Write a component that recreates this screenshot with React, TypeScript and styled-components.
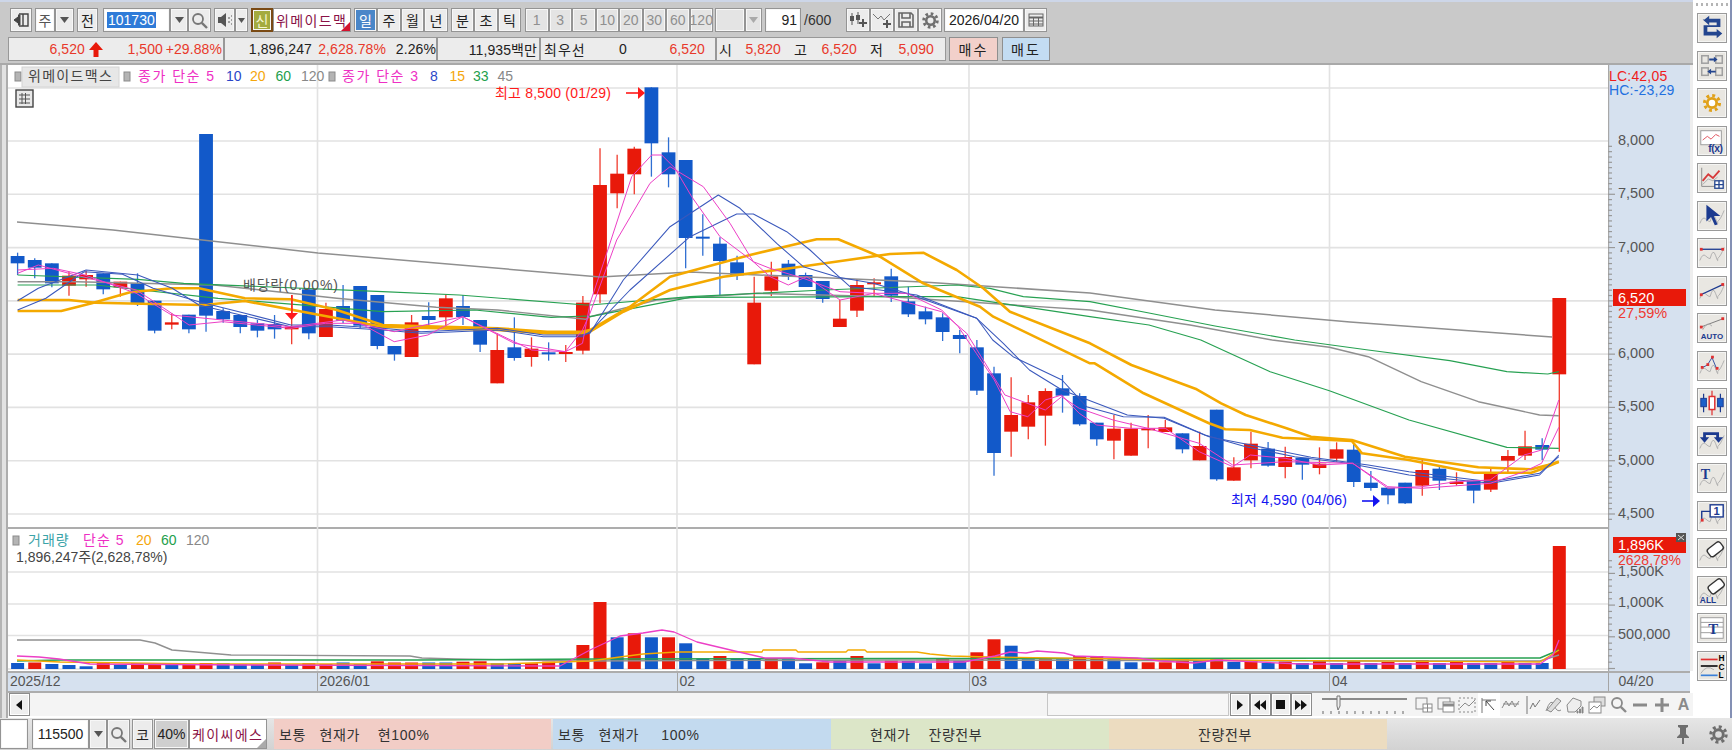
import React from "react";
import styled, { createGlobalStyle } from "styled-components";

const FONT = `"Liberation Sans", "Noto Sans CJK KR", sans-serif`;
const RED = "#e8190a", BLUE = "#1259c9", TXT_RED = "#e8392b";

const Global = createGlobalStyle`
  html, body { margin: 0; width: 1732px; height: 750px; overflow: hidden; background: #fff; font-family: ${FONT}; }
  * { box-sizing: border-box; }
`;

/* ---------- page frame ---------- */
const Page = styled.div`display: flex; flex-direction: column; width: 1732px; height: 750px;`;
const Main = styled.div`display: flex; height: 718px;`;
const LeftCol = styled.div`display: flex; flex-direction: column; width: 1693px;`;
const Header = styled.div`
  height: 65px; background: #c9c9c9; border-top: 2px solid #cdd6e8; border-bottom: 2px solid #a9a9a9;
  padding: 6px 0 0 0; display: flex; flex-direction: column; gap: 5px;
`;
const Row = styled.div<{ $h: number }>`display: flex; align-items: stretch; height: ${p => p.$h}px; padding-left: 10px;`;
const Btn = styled.div<{ $w: number; $ml?: number; $off?: boolean; $bg?: string; $c?: string }>`
  flex: none; width: ${p => p.$w}px; margin-left: ${p => p.$ml ?? 0}px;
  display: flex; align-items: center; justify-content: center; position: relative;
  background: ${p => p.$bg ?? (p.$off ? "#e4e4e4" : "#ececec")}; color: ${p => p.$c ?? (p.$off ? "#8f8f8f" : "#222")};
  border: 1px solid #949494; box-shadow: inset 0 0 0 1px #f7f7f7;
  font-size: 14px; white-space: nowrap; overflow: hidden;
`;
const Sel = styled.span`background: #2f7bd8; color: #fff; font-size: 14px; height: 16px; line-height: 16px; padding: 0 1px;`;
const NameCell = styled(Btn)`justify-content: flex-start; padding-left: 2px; letter-spacing: 1.4px; color: #8a1246; box-shadow: none;`;
const Corner = styled.i`position: absolute; right: 0; bottom: 0; border-style: solid; border-width: 0 0 9px 9px; border-color: transparent transparent #d4122e transparent;`;
const Plain = styled.span`flex: none; margin-left: 3px; width: 40px; color: #333; font-size: 14px; align-self: center;`;

const InfoCell = styled.div<{ $w: number; $ml?: number }>`
  flex: none; width: ${p => p.$w}px; margin-left: ${p => p.$ml ?? 0}px; display: flex; align-items: center;
  background: #ececec; border: 1px solid #989898; font-size: 14px; white-space: nowrap;
`;
const Val = styled.span<{ $w: number; $left?: boolean; $c?: string; $ls?: number }>`
  flex: none; width: ${p => p.$w}px; text-align: ${p => (p.$left ? "left" : "right")};
  color: ${p => p.$c ?? "#222"}; letter-spacing: ${p => p.$ls ?? 0.1}px;
`;
const Trade = styled.div<{ $bg: string; $w: number; $ml: number }>`
  flex: none; width: ${p => p.$w}px; margin-left: ${p => p.$ml}px; background: ${p => p.$bg}; color: #222;
  border: 1px solid #8f8f8f; display: flex; align-items: center; justify-content: center; font-size: 14px; letter-spacing: 2px;
`;

/* ---------- chart ---------- */
const ChartWrap = styled.div`display: flex; flex: 1;`;
const Edge = styled.div`width: 8px; background: #e2e2e2; border-left: 2px solid #b4b4b4; border-right: 2px solid #adadad;`;
const ChartCol = styled.div`display: flex; flex-direction: column; width: 1685px;`;
const Pane = styled.div<{ $h: number; $line?: boolean }>`
  display: flex; height: ${p => p.$h}px;
  ${p => (p.$line ? "box-shadow: inset 0 -2px 0 #adadad; position: relative;" : "")}
`;
const Plot = styled.svg<{ $w: number }>`display: block; flex: none; width: ${p => p.$w}px; height: 100%; font-family: ${FONT};`;
const AxisEnd = styled.div`width: 3px; background: #eee;`;
const XRow = styled.div`display: flex; height: 22px; background: #d6e1ef; border-top: 2px solid #adadad; border-bottom: 2px solid #adadad; width: 1682px;`;
const XCell = styled.div<{ $w: number; $pl?: number; $end?: boolean }>`
  flex: none; width: ${p => p.$w}px; border-right: ${p => (p.$end ? "0" : "1px solid #a5a5a5")}; padding-left: ${p => p.$pl ?? 2}px;
  font-size: 14px; color: #555; line-height: 17px;
`;
const ScrollRow = styled.div`
  display: flex; align-items: stretch; height: 23px; width: 1685px; padding-left: 1px;
  background-color: #f4f4f4; background-image: radial-gradient(#e8e8e8 .6px, transparent .6px); background-size: 2px 2px;
`;
const SBtn = styled.div<{ $ml?: number; $w?: number }>`
  flex: none; width: ${p => p.$w ?? 20.500}px; margin-left: ${p => p.$ml ?? 0}px; display: flex; align-items: center; justify-content: center;
  background: #efefef; border: 1px solid #8c8c8c; box-shadow: inset 0 0 0 1px #fff;
`;
const Thumb = styled.div`flex: none; width: 182px; margin-left: 1017px; background: #f6f6f6; border: 1px solid #c6c6c6;`;
const Slider = styled.svg`flex: none; margin-left: 8px; width: 92px; height: 23px;`;
const MiniIcon = styled.div<{ $ml?: number; $on?: boolean }>`
  flex: none; width: 21.600px; margin-left: ${p => p.$ml ?? 0}px; display: flex; align-items: center; justify-content: center;
  background: ${p => (p.$on ? "#fff" : "transparent")}; color: #8a8a8a; font-weight: 700; font-size: 16px;
`;

/* ---------- right toolbar ---------- */
const Side = styled.div`
  width: 39px; background: #fff; border-right: 2px solid #8490b4; display: flex; flex-direction: column; gap: 7.5px; padding: 13px 0 0 4px; position: relative;
`;
const Grip = styled.i`
  position: absolute; left: 3px; top: 3px; width: 33px; height: 3px;
  background: repeating-linear-gradient(90deg, #b5b5b5 0 2px, transparent 2px 5px);
`;
const SideBtn = styled.div`
  flex: none; width: 30px; height: 30px; background: #e9e7e2; border: 1px solid #9a9a9a; box-shadow: inset 0 0 0 1px #f5f5f3;
  display: flex; align-items: center; justify-content: center;
`;

/* ---------- bottom bar ---------- */
const Bottom = styled.div`
  display: flex; align-items: stretch; height: 32px; padding: 1px 0 1px 0; background: linear-gradient(#e6e6e6, #d2d2d2); position: relative;
`;
const BCell = styled(Btn)`font-size: 14px;`;
const Order = styled.div<{ $bg: string; $w: number; $pl: number; $ml?: number }>`
  flex: none; width: ${p => p.$w}px; margin-left: ${p => p.$ml ?? 0}px; background: ${p => p.$bg}; padding-left: ${p => p.$pl}px;
  display: flex; align-items: center; font-size: 14px; color: #333; letter-spacing: .6px; white-space: pre;
`;
const Tail = styled.div`margin-left: auto; display: flex; align-items: center; gap: 16px; padding-right: 4px;`;

/* ---------- icons ---------- */
const DD = () => <svg width="9" height="6"><path d="M0 0h9L4.5 6z" fill="#555" /></svg>;
const Lens = ({ c = "#777" }: { c?: string }) => (
  <svg width="17" height="17" viewBox="0 0 17 17" fill="none" stroke={c} strokeWidth="1.8"><circle cx="7" cy="7" r="5" /><path d="M10.8 10.8 16 16" strokeWidth="2.4" /></svg>
);
const Gear = ({ s = 18, c = "#777", hole = "none" }: { s?: number; c?: string; hole?: string }) => (
  <svg width={s} height={s} viewBox="0 0 20 20">
    <circle cx="10" cy="10" r="8" stroke={c} strokeWidth="3.4" strokeDasharray="3.1 3.18" fill="none" />
    <circle cx="10" cy="10" r="5" stroke={c} strokeWidth="3" fill={hole} />
  </svg>
);
const Wave = () => <path d="M2 23q3-8 6-5t5 3q3-12 6-3t2 3q3-2 7-12" fill="none" stroke="#aeaeae" strokeWidth="1" />;
const S: React.FC<{ children?: React.ReactNode }> = ({ children }) => (
  <svg width="28" height="28" viewBox="0 0 30 30" fontFamily={`"Liberation Sans", sans-serif`}>{children}</svg>
);
const Eraser = ({ x, y }: { x: number; y: number }) => (
  <rect x={x} y={y} width={17} height={10} rx={3} fill="#fff" stroke="#333" strokeWidth="1.5" transform={`rotate(-38 ${x + 8.5} ${y + 5})`} />
);
const sideIcons: React.ReactNode[] = [
  <S><path d="M8 6h-1l5-4v3h12v9H10v5h10v-3l6 5-6 5v-3H6V12h14V9H12v3L5 6z" fill="#24468f" /></S>,
  <S><g fill="none" stroke="#a0a0a0" strokeWidth="1.6"><rect x="4" y="4" width="7" height="8" /><rect x="19" y="4" width="7" height="8" /><rect x="4" y="17" width="7" height="8" /><rect x="19" y="17" width="7" height="8" /></g><path d="M12 8h7M12 21h7" stroke="#24468f" strokeWidth="2" /><path d="m17 5 4 3-4 3zM14 18l-4 3 4 3z" fill="#24468f" /></S>,
  <S><g transform="translate(5 5)"><Gear s={20} c="#e0a11a" hole="#fff" /></g></S>,
  <S><rect x="3" y="4" width="22" height="15" fill="#fff" stroke="#999" /><path d="M5 14l5-4 4 3 5-5 4 2" stroke="#e0505a" fill="none" /><text x="11" y="27" fontSize="11" fontWeight="700" fill="#1c3a8f" letterSpacing="-.5">f(x)</text></S>,
  <S><path d="M4 4v20h16" stroke="#888" fill="none" /><path d="M5 18l6-7 5 4 7-8" stroke="#d63a3a" strokeWidth="2" fill="none" /><path d="M5 22l6-6 5 2 5-4" stroke="#aaa" fill="none" /><g fill="#fff" stroke="#24468f" strokeWidth="1.4"><rect x="18" y="18" width="9" height="8" /><path d="M22.5 18v8M18 22h9" /></g></S>,
  <S><Wave /><path d="M9 3v18l5-5 4 9 3-1-4-9h7z" fill="#1c3a8f" /></S>,
  <S><Wave /><path d="M3 11h24" stroke="#1c3a8f" strokeWidth="1.4" /><rect x="2" y="9.500" width="3" height="3" fill="#e03030" /><rect x="25" y="9.500" width="3" height="3" fill="#e03030" /></S>,
  <S><Wave /><path d="M3 19 27 8" stroke="#1c3a8f" strokeWidth="1.4" /><rect x="2" y="17.500" width="3" height="3" fill="#e03030" /><rect x="25" y="6.500" width="3" height="3" fill="#e03030" /></S>,
  <S><path d="M3 14 27 5" stroke="#777" /><rect x="2" y="12.500" width="3" height="3" fill="#e03030" /><rect x="25" y="3.500" width="3" height="3" fill="#e03030" /><path d="M5 17q5-10 10-4" stroke="#aaa" fill="none" /><text x="3" y="27" fontSize="8.500" fontWeight="700" fill="#1c3a8f">AUTO</text></S>,
  <S><Wave /><path d="M4 17l6-3 5-8 5 12" stroke="#2b4aa0" fill="none" /><g fill="#e03030"><rect x="3" y="15" width="3" height="3" /><rect x="9" y="12" width="3" height="3" /><rect x="14" y="4" width="3" height="3" /><rect x="19" y="16" width="3" height="3" /></g></S>,
  <S><path d="M6 5v20M24 5v20" stroke="#1c3a8f" strokeWidth="1.3" /><path d="M15 2v26" stroke="#e03030" strokeWidth="1.3" /><rect x="3" y="10" width="6" height="9" fill="#1c5fc9" stroke="#1c3a8f" /><rect x="12" y="8" width="6" height="14" fill="#fff" stroke="#e03030" strokeWidth="1.6" /><rect x="21" y="10" width="6" height="9" fill="#1c5fc9" stroke="#1c3a8f" /></S>,
  <S><Wave /><path d="M7 15V7h14v6" stroke="#1c3a8f" strokeWidth="3" fill="none" /><path d="M2 11h10l-5 6zM17 11h10l-5 6z" fill="#1c3a8f" /></S>,
  <S><Wave /><text x="3" y="16" fontSize="15" fontWeight="700" fontFamily="Liberation Serif" fill="#1c3a8f">T</text></S>,
  <S><Wave /><path d="M4 20V10h9" stroke="#1c3a8f" strokeWidth="1.5" fill="none" /><rect x="3" y="18" width="3" height="3" fill="#e03030" /><rect x="13" y="3" width="14" height="13" fill="#fff" stroke="#1c3a8f" strokeWidth="1.5" /><text x="16.500" y="14" fontSize="12" fontWeight="700" fill="#1c3a8f">1</text></S>,
  <S><Wave /><Eraser x={10} y={6} /></S>,
  <S><Wave /><Eraser x={11} y={5} /><text x="2" y="28" fontSize="9" fontWeight="700" fill="#1c3a8f">ALL</text></S>,
  <S><g stroke="#999" fill="#fff"><rect x="3" y="4" width="24" height="22" /><path d="M3 9h24M3 14h24M3 20h24" /></g><text x="11" y="21" fontSize="16" fontWeight="700" fontFamily="Liberation Serif" fill="#1c3a8f">T</text></S>,
  <S><path d="M3 8h18" stroke="#e03030" strokeWidth="1.8" /><path d="M3 15h18" stroke="#111" strokeWidth="1.8" /><path d="M3 25h18" stroke="#3a80d8" strokeWidth="1.8" /><path d="M3 23q6-10 14-4" stroke="#aaa" fill="none" /><text x="22" y="10" fontSize="9" fontWeight="700">H</text><text x="22" y="19" fontSize="9" fontWeight="700">C</text><text x="22" y="28" fontSize="9" fontWeight="700">L</text></S>,
];
const M: React.FC<{ children?: React.ReactNode }> = ({ children }) => (
  <svg width="20" height="20" viewBox="0 0 20 20" fill="none" stroke="#8a8a8a">{children}</svg>
);
const tray: React.ReactNode[] = [
  <M><rect x="2" y="3" width="11" height="11" /><rect x="9" y="9" width="9" height="8" fill="#fff" /><path d="M13.500 9v8M9 13h9" /></M>,
  <M><rect x="2" y="3" width="12" height="11" /><rect x="7" y="7" width="11" height="10" fill="#fff" /><path d="M7 10h11" strokeWidth="3" /></M>,
  <M><rect x="2" y="3" width="16" height="14" strokeDasharray="2 2" /><path d="M3 13l5-5 4 3 6-6" /></M>,
  <M><path d="M3 3v15M3 5h14" stroke="#777" /><path d="M15 15 7 6m0 5V6h5" stroke="#444" /></M>,
  <M><path d="M1 13l4-7 3 5 3-5 3 6 4-6M2 9h16" /></M>,
  <M><path d="M5 1v18M8 14l3-6 2 4 5-7" stroke="#777" /></M>,
  <M><path d="M2 16q5-14 8-6t7 5" /><path d="M3 15 13 3l4 3L7 17z" fill="#ddd" /></M>,
  <M><path d="M2 10 8 3l8 3v5l-6 6H3z" fill="#eee" /><path d="M12 16h1v2h-1zM14.500 14h1v4h-1zM17 12h1v6h-1z" fill="#777" /></M>,
  <M><rect x="7" y="2" width="11" height="9" fill="#ddd" /><rect x="2" y="7" width="12" height="11" fill="#fff" /><path d="M3 15l4-4 3 2 3-3" /></M>,
];

/* ---------- chart data ---------- */
const X = (i: number) => 17.6 + 17.13 * i;
const Y = (p: number) => 141 + (8000 - p) * 0.10657;
type Z = [number, number];
const z7 = (a: Z[]): Z[] => a.map(([x, y]) => [x / 2.613, 230 + y / 3]);
const z8 = (a: Z[]): Z[] => a.map(([x, y]) => [590 + x / 3, 80 + y / 3]);
const z9 = (a: Z[]): Z[] => a.map(([x, y]) => [960 + x / 2.45, 340 + y / 3]);
type C = ["R" | "B", number, number, number, number];
const mapC = (y0: number, a: C[]): C[] => a.map(([c, t, b, wt, wb]) => [c, y0 + t / 3, y0 + b / 3, y0 + wt / 3, y0 + wb / 3]);
const candles: C[] = [
  ...mapC(230, [
    ["B",78,100,68,135],["B",90,113,85,145],["B",100,160,100,172],["R",137,167,125,197],["R",135,148,122,170],
    ["B",130,178,130,193],["R",155,172,155,200],["B",160,220,130,228],["B",212,302,212,310],["R",277,284,250,298],
    ["B",254,298,254,310],["B",-288,257,-288,305],["B",243,268,235,278],["B",255,291,255,310],["B",280,302,270,322],
    ["B",282,298,255,326],["R",290,298,195,343],["B",178,310,178,328],["R",237,321,218,321],["B",228,272,165,280],
    ["B",168,287,168,295],["B",195,348,195,358],["B",348,373,348,392],["R",277,381,255,381],["B",258,270,217,290],
    ["R",205,262,193,298],["B",228,261,195,285],["B",270,344,270,366],["R",360,460,310,460],["B",352,384,262,392],
    ["R",356,381,322,410],["B",367,372,337,392],["R",366,368,345,396],["R",218,362,198,373],
  ]),
  ...mapC(80, [
    ["R",315,643,205,670],["R",281,340,224,385],["R",206,283,200,343],["B",22,190,22,290],["B",217,283,172,322],
    ["B",240,474,240,565],["B",470,476,403,527],["B",491,543,472,647],["B",547,586,527,600],["R",668,853,590,853],
    ["R",589,632,545,648],["B",551,589,540,600],["B",585,621,578,621],["B",603,657,603,668],["R",716,741,660,741],
    ["R",615,692,597,711],["R",607,613,595,650],["B",589,647,566,666],["B",664,703,620,711],["B",694,718,680,733],
    ["B",712,756,700,783],["B",765,777,750,820],
  ]),
  ...mapC(340, [
    ["B",22,152,0,165],["B",100,339,80,407],["R",225,275,112,350],["R",187,260,165,298],["R",153,227,145,317],
    ["B",145,167,105,218],["B",168,253,160,257],["B",248,298,248,317],["R",266,302,225,358],["R",266,347,248,347],
    ["R",265,271,225,325],["R",262,276,240,276],["B",280,328,280,340],["R",318,361,275,361],["B",209,418,209,422],
    ["R",382,422,352,422],["R",311,361,275,385],["B",326,377,306,380],["R",351,381,320,415],["B",353,374,353,419],
    ["R",371,384,322,403],["R",328,356,307,365],["B",329,426,310,441],["B",428,444,393,452],["B",443,466,443,493],
    ["B",428,490,428,492],["R",390,437,358,467],["B",386,422,378,450],["R",425,432,397,437],["B",422,452,422,490],
    ["R",398,449,385,456],["R",348,362,330,397],["R",319,347,272,360],["B",315,329,295,360],
    ["R",-126,103,-126,335],
  ]),
];

const lines: { c: string; w: number; pts: Z[] }[] = [
  { c: "#8f8f8f", w: 1.5, pts: [[17,222],[113,230],[318,253],[600,277],[690,272],[923,282],[1090,293],[1215,310],[1350,322],[1552,337]] },
  { c: "#8f8f8f", w: 1.4, pts: [...z7([[46,155],[200,155],[560,165],[880,205],[1140,232],[1300,240],[1530,268]]), ...z8([[0,710],[200,660],[500,640],[900,650],[1500,690]]), [1190,325], ...z9([[765,0],[905,22],[1000,50],[1130,125],[1270,185],[1420,225],[1467,227]])] },
  { c: "#27a152", w: 1.2, pts: [...z7([[46,135],[360,148],[480,160],[1000,185],[1200,195],[1530,225]]), ...z8([[0,675],[300,650],[700,630],[1100,615],[1200,625],[1300,650],[1500,665]]), [1149,313],[1215,326], ...z9([[820,0],[1000,30],[1200,62],[1340,95],[1440,102],[1467,95]])] },
  { c: "#27a152", w: 1.2, pts: [...z7([[46,165],[250,165],[570,205],[1000,245],[1240,240],[1440,262],[1530,258]]), ...z8([[0,710],[300,652],[900,650],[1100,650],[1300,680],[1500,710]]), [1149,325], ...z9([[590,0],[760,95],[905,152],[1100,240],[1340,322],[1467,325]])] },
  { c: "#f4a900", w: 2.6, pts: [...z7([[46,243],[160,243],[240,220],[340,187],[450,175],[520,175],[640,205],[760,208],[880,240],[1000,285],[1300,295],[1430,305],[1520,305]]), ...z8([[0,750],[120,680],[240,590],[480,525],[680,478],[745,478],[870,530],[1000,610],[1170,680],[1210,710],[1500,850]]), ...z9([[330,70],[450,160],[610,250],[650,268],[710,270],[790,293],[870,298],[960,303],[985,340],[1100,360],[1260,398],[1400,398],[1430,385],[1467,365]])] },
  { c: "#f4a900", w: 2.6, pts: [...z7([[46,210],[180,210],[250,218],[400,222],[530,225],[640,213],[860,260],[1000,290],[1300,300],[1430,310],[1520,310]]), ...z8([[0,755],[100,695],[240,630],[400,590],[600,565],[900,522],[1000,518],[1100,570],[1180,625],[1260,695],[1500,790]]), ...z9([[420,75],[580,148],[640,190],[700,225],[800,265],[860,290],[960,300],[1090,350],[1270,382],[1400,388],[1440,375],[1467,365]])] },
  { c: "#3a58bc", w: 1.05, pts: [...z7([[46,240],[120,205],[220,125],[320,133],[400,175],[520,215],[640,250],[760,285],[860,285],[1000,295],[1100,305],[1300,295],[1420,315],[1520,315]]), ...z8([[0,760],[100,600],[240,440],[385,345],[450,385],[560,490],[640,560],[745,592],[850,610],[950,640],[1160,715],[1240,790]]), ...z9([[170,90],[250,150],[410,225],[500,235],[610,290],[700,312],[860,352],[1000,375],[1100,395],[1300,425],[1420,400],[1467,350]])] },
  { c: "#3a58bc", w: 1.05, pts: [...z7([[46,212],[100,175],[225,120],[360,135],[450,175],[520,225],[640,258],[760,290],[860,290],[1000,300],[1100,310],[1300,300],[1420,320],[1520,320]]), ...z8([[0,755],[120,630],[300,470],[440,402],[490,402],[590,455],[660,510],[730,575],[780,620],[870,630],[980,645],[1160,715]]), ...z9([[80,0],[130,50],[250,120],[310,200],[400,230],[500,232],[600,285],[700,320],[820,350],[950,370],[1100,405],[1300,430],[1420,405],[1467,345]])] },
  { c: "#ec3fc6", w: 1, pts: [...z7([[46,130],[100,105],[180,130],[268,155],[356,180],[403,215],[494,285],[582,275],[670,285],[760,295],[850,280],[941,280],[1030,335],[1118,315],[1209,260],[1298,310],[1389,360],[1477,365],[1522,340]]), ...z8([[0,670],[50,520],[125,290],[185,225],[215,225],[255,265],[305,350],[390,470],[490,545],[540,590],[595,615],[650,590],[750,660],[852,640],[950,640],[1055,690],[1105,740]]), ...z9([[40,40],[84,120],[123,215],[166,230],[209,180],[249,165],[292,220],[335,255],[418,265],[503,265],[586,335],[668,380],[711,345],[797,355],[880,375],[962,370],[1048,445],[1131,440],[1216,425],[1299,420],[1382,345],[1425,330],[1467,180]])] },
  { c: "#ec3fc6", w: 1, pts: [...z7([[46,120],[140,115],[222,135],[356,190],[448,255],[582,270],[760,290],[896,270],[1030,305],[1209,260],[1344,340],[1477,365],[1522,300]]), ...z8([[0,700],[80,480],[180,310],[215,280],[240,260],[340,320],[420,430],[490,545],[540,565],[640,595],[750,635],[850,640],[1055,695],[1130,760]]), ...z9([[110,165],[209,210],[249,170],[292,205],[375,240],[460,265],[586,310],[668,375],[797,365],[962,370],[1048,440],[1131,445],[1299,430],[1382,395],[1425,370],[1467,262]])] },
];
const pts = (a: Z[]) => a.map(([x, y]) => `${x.toFixed(1)},${y.toFixed(1)}`).join(" ");
const VGRID = [317.5, 677, 969, 1329.5];

const volC =
  "BRBBBRBRRBRRBBBRBRRBBRRRBBRRBBRRBR" + /* 0-33 */
  "RBRBRB" + /* 34-39 */
  "BRBBRBBRBRBRBBRBRRBBRBRRBBRRRB" + /* 40-69 */
  "RBRBRBRBRBRBRBRBBRBB" + /* 70-89 */
  "R";
const volH = [
  6,6.5,5,4,2.7,6.5,4.3,6,6,4,5,6,5.7,5,4.3,6.5,4.3,5.7,5,6.5,5,7.7,6.5,6.5,6.5,6.5,7.3,7.7,5.7,5.7,5.7,7.3,6.5,24,
  67,31.700,35.700,31.700,31.700,25.700,
  10.700,13,10.700,10.700,9.700,9.700,5.700,6.700,8,13,5.700,8.300,8,5.700,10.700,8.300,16.700,29.700,23.300,9.700,9.700,9.700,13,13,9.700,6.700,6.700,6.700,9.700,8,
  9.700,7,8,6,7.500,6,8,6,8,6,7,6,9,6,7,6,6,7,6,6,
  123,
];
const volLines: { c: string; w: number; pts: Z[] }[] = [
  { c: "#909090", w: 1.4, pts: [[17,640],[140,640],[155,643],[172,650],[196,652],[231,655],[410,656],[422,658],[455,659],[577,661],[900,660],[1400,661],[1540,661],[1559,655]] },
  { c: "#27a152", w: 1.4, pts: [[17,661],[60,660],[130,660],[420,660],[600,659],[900,658.500],[1100,658.500],[1540,658],[1559,650]] },
  { c: "#f4a900", w: 1.3, pts: [[17,660],[60,662],[200,664],[500,664],[590,661],[620,657],[643,654],[660,653],[677,652],[762,652],[763,650],[796,650],[798,652],[846,652],[848,650],[865,650],[867,652],[917,652],[930,654],[951,656],[989,657],[1200,660],[1540,662],[1559,650]] },
  { c: "#ec3fc6", w: 1.3, pts: [[17,656],[39,657],[59,659],[90,664],[250,665],[560,666],[590,650],[620,636],[643,633],[662,630],[674,632],[697,642],[739,652],[765,658],[792,658],[830,662],[964,662],[995,656],[1010,652],[1026,653],[1037,651],[1064,653],[1075,656],[1137,658],[1160,661],[1194,663],[1217,660],[1300,664],[1540,664],[1553,655],[1559,640]] },
];

const Txt: React.FC<{ x: number; y: number; c?: string; s?: number; ls?: number; children: React.ReactNode }> = ({ x, y, c = "#555", s = 14, ls = 0, children }) => (
  <text x={x} y={y} fill={c} fontSize={s} letterSpacing={ls} dominantBaseline="central">{children}</text>
);
const Box = ({ x, y }: { x: number; y: number }) => <rect x={x} y={y} width={6} height={9} fill="#b4b4b4" stroke="#8b8b8b" />;

const Grid = ({ ys }: { ys: number[] }) => (
  <g stroke="#e2e2e2" strokeWidth="1.6">
    {ys.map(y => <line key={y} x1={8} x2={1608} y1={y} y2={y} />)}
    {VGRID.map(x => <line key={x} x1={x} x2={x} y1={65} y2={672} />)}
  </g>
);

const PricePlot = () => (
  <Plot $w={1600} viewBox="8 65 1600 464">
    <Grid ys={[88, 141, 194.300, 247.600, 300.900, 354.100, 407.400, 460.700, 514]} />
    {candles.map(([c, t, b, wt, wb], i) => {
      const col = c === "R" ? RED : BLUE; const x = X(i);
      return (
        <g key={i}>
          <line x1={x} x2={x} y1={wt} y2={wb} stroke={c === "R" ? "#f03a2c" : "#2f6fd2"} strokeWidth="1.3" />
          <rect x={x - 6.9} y={t} width={13.8} height={Math.max(b - t, 2)} fill={col} />
        </g>
      );
    })}
    {lines.map((l, i) => <polyline key={i} points={pts(l.pts)} fill="none" stroke={l.c} strokeWidth={l.w} strokeLinejoin="round" />)}

    <Box x={15} y={72} />
    <rect x={22} y={67} width={97} height={20} fill="#e7e7e7" stroke="#d4d4d4" />
    <Txt x={28} y={76} c="#444" ls={1.3}>위메이드맥스</Txt>
    <Box x={124} y={72} />
    <Txt x={138} y={76} c="#ee2fc4" ls={1.5}>종가 단순 5</Txt>
    <Txt x={226} y={76} c="#2a46c8">10</Txt>
    <Txt x={250} y={76} c="#f5a60c">20</Txt>
    <Txt x={275.500} y={76} c="#1ea04c">60</Txt>
    <Txt x={301} y={76} c="#888">120</Txt>
    <Box x={329} y={72} />
    <Txt x={342} y={76} c="#ee2fc4" ls={1.5}>종가 단순 3</Txt>
    <Txt x={430} y={76} c="#2a46c8">8</Txt>
    <Txt x={449.500} y={76} c="#f5a60c">15</Txt>
    <Txt x={473} y={76} c="#1ea04c">33</Txt>
    <Txt x={497.500} y={76} c="#888">45</Txt>

    <g transform="translate(16 90)" stroke="#555" fill="#e8e8e8">
      <rect x={0} y={0} width={17} height={17} stroke="#444" strokeWidth="1.4" />
      <path d="M3 5h11M3 9h11M3 13h11M6 3v11M9.500 3v11" fill="none" strokeWidth="1" />
    </g>

    <Txt x={495} y={92.500} c="#ff1a1a" ls={.2}>최고 8,500 (01/29)</Txt>
    <path d="M626 93h13" stroke="#ff1a1a" strokeWidth="1.6" /><path d="M638 87l7 6-7 6z" fill="#ff1a1a" />
    <Txt x={243} y={285} c="#555" ls={.8}>배당락(0.00%)</Txt>
    <path d="M292 295v20" stroke="#ff1a1a" strokeWidth="1.4" /><path d="M285 313h13l-6.500 7z" fill="#ff1a1a" />
    <Txt x={1231} y={500} c="#1414f0" ls={.2}>최저 4,590 (04/06)</Txt>
    <path d="M1362 501h12" stroke="#1414f0" strokeWidth="1.6" /><path d="M1373 495l7 6-7 6z" fill="#1414f0" />
  </Plot>
);

const Ticks = ({ ys, major }: { ys: number[]; major: number[] }) => (
  <g stroke="#999" strokeWidth="1.2">
    {ys.map(y => <line key={y} x1={1608} x2={major.some(m => Math.abs(m - y) < 0.6) ? 1615 : 1612} y1={y} y2={y} />)}
  </g>
);
const priceTicks = Array.from({ length: 71 }, (_, i) => Y(4450 + i * 50)).filter(y => y > 100 && y < 527);
const PriceAxis = () => (
  <Plot $w={82} viewBox="1608 65 82 464">
    <rect x={1608} y={65} width={82} height={464} fill="#d6e1ef" />
    <line x1={1608.500} x2={1608.500} y1={65} y2={529} stroke="#a8a8a8" strokeWidth="1.4" />
    <Ticks ys={priceTicks} major={[8000, 7500, 7000, 6500, 6000, 5500, 5000, 4500].map(Y)} />
    {[["8,000", 8000], ["7,500", 7500], ["7,000", 7000], ["6,000", 6000], ["5,500", 5500], ["5,000", 5000], ["4,500", 4500]].map(([t, p]) => (
      <Txt key={t as string} x={1618} y={Y(p as number) - 1} c="#555" s={14.500}>{t}</Txt>
    ))}
    <Txt x={1609} y={76} c="#ef1c1c" s={14} ls={.2}>LC:42,05</Txt>
    <Txt x={1609} y={90} c="#2270e0" s={14} ls={.2}>HC:-23,29</Txt>
    <rect x={1613} y={289} width={73} height={17} fill={RED} />
    <Txt x={1618} y={297.500} c="#fff" s={14.500}>6,520</Txt>
    <Txt x={1618} y={313} c="#ee3a32" s={14.500}>27,59%</Txt>
  </Plot>
);

const VolumePlot = () => (
  <Plot $w={1600} viewBox="8 529 1600 142">
    <Grid ys={[572, 604, 635.500, 669]} />
    {volH.map((h, i) => (
      <rect key={i} x={X(i) - 6.5} y={669 - h} width={13} height={h} fill={volC[i] === "R" ? RED : BLUE} />
    ))}
    {volLines.map((l, i) => <polyline key={i} points={pts(l.pts)} fill="none" stroke={l.c} strokeWidth={l.w} strokeLinejoin="round" />)}
    <Box x={13} y={536} />
    <Txt x={28} y={540} c="#3ba3a8" ls={1}>거래량</Txt>
    <Txt x={83} y={540} c="#ee2fc4" ls={1}>단순 5</Txt>
    <Txt x={136} y={540} c="#f5a60c">20</Txt>
    <Txt x={161} y={540} c="#1ea04c">60</Txt>
    <Txt x={186} y={540} c="#888">120</Txt>
    <Txt x={16} y={557} c="#444">1,896,247주(2,628,78%)</Txt>
  </Plot>
);
const volTicks = Array.from({ length: 21 }, (_, i) => 668.500 - i * 6.34).filter(y => y > 560);
const VolumeAxis = () => (
  <Plot $w={82} viewBox="1608 529 82 142">
    <rect x={1608} y={529} width={82} height={142} fill="#d6e1ef" />
    <line x1={1608.500} x2={1608.500} y1={529} y2={671} stroke="#a8a8a8" strokeWidth="1.4" />
    <Ticks ys={volTicks} major={[668.500, 636.800, 605.100, 573.400]} />
    <Txt x={1618} y={571} c="#555" s={14.500}>1,500K</Txt>
    <Txt x={1618} y={602} c="#555" s={14.500}>1,000K</Txt>
    <Txt x={1618} y={634} c="#555" s={14.500}>500,000</Txt>
    <rect x={1613} y={537} width={73} height={16} fill={RED} />
    <Txt x={1618} y={545} c="#fff" s={14.500}>1,896K</Txt>
    <rect x={1614} y={553} width={66} height={13} fill="#d6e1ef" />
    <Txt x={1618} y={560} c="#ee3a32" s={14}>2628,78%</Txt>
    <rect x={1676} y={533} width={10} height={9} fill="#555" />
    <path d="M1678 535l6 5m0-5-6 5" stroke="#ddd" strokeWidth="1" />
  </Plot>
);

const NUMS = ["1", "3", "5", "10", "20", "30", "60", "120"];

export default function App() {
  return (
    <Page>
      <Global />
      <Main>
        <LeftCol>
          <Header>
            <Row $h={24}>
              <Btn $w={22}>
                <svg width="16" height="16" viewBox="0 0 16 16" fill="none" stroke="#444"><path d="M6 2h9v12H6M10 2v12" strokeWidth="1.4" /><path d="M1 8l4-3v6zM5 3h2v10H5" fill="#444" /></svg>
              </Btn>
              <Btn $w={20} $ml={3} $bg="#fff" $c="#555">주</Btn>
              <Btn $w={19}><DD /></Btn>
              <Btn $w={21} $ml={3}>전</Btn>
              <Btn $w={67} $ml={5} $bg="#fff" style={{ justifyContent: "flex-start", paddingLeft: 3 }}><Sel>101730</Sel></Btn>
              <Btn $w={18}><DD /></Btn>
              <Btn $w={23}><Lens /></Btn>
              <Btn $w={21} $ml={3}>
                <svg width="16" height="14" viewBox="0 0 16 14"><path d="M1 4h3l5-4v14L4 10H1z" fill="#555" /><path d="M11 5h2M11 9h2M14 3h1M14 7h1M14 11h1" stroke="#555" /></svg>
              </Btn>
              <Btn $w={13}><svg width="7" height="5"><path d="M0 0h7L3.500 5z" fill="#555" /></svg></Btn>
              <Btn $w={22} $ml={3} $bg="#a4ab3f" $c="#f6f6d0" style={{ border: "2px solid #7a4a14" }}>신</Btn>
              <NameCell $w={78} $bg="#fff">위메이드맥<Corner /></NameCell>
              <Btn $w={23} $ml={3} $bg="#4a86c8" $c="#fff">일</Btn>
              <Btn $w={24}>주</Btn>
              <Btn $w={23}>월</Btn>
              <Btn $w={24}>년</Btn>
              <Btn $w={23} $ml={3}>분</Btn>
              <Btn $w={24}>초</Btn>
              <Btn $w={23}>틱</Btn>
              {NUMS.map((n, i) => <Btn key={n} $off $w={23.5} $ml={i === 0 ? 4 : 0}>{n}</Btn>)}
              <Btn $off $w={30} $ml={2} />
              <Btn $off $w={17}><svg width="9" height="6"><path d="M0 0h9L4.500 6z" fill="#aaa" /></svg></Btn>
              <Btn $w={36} $ml={3} $bg="#fff" style={{ justifyContent: "flex-end", paddingRight: 3 }}>91</Btn>
              <Plain>/600</Plain>
              <Btn $w={24} $ml={2}>
                <svg width="20" height="18" viewBox="0 0 20 18" fill="#555"><path d="M4 2v12M10 1v12" stroke="#555" /><rect x="2" y="5" width="4" height="5" /><rect x="8" y="4" width="4" height="5" /><path d="M15 8v8M11 12h8" stroke="#555" strokeWidth="2" /></svg>
              </Btn>
              <Btn $w={24}>
                <svg width="20" height="18" viewBox="0 0 20 18" fill="none" stroke="#777"><path d="M1 3l5 5 3-3 3 4 6-6" /><path d="M15 9v8M11 13h8" stroke="#555" strokeWidth="2" /></svg>
              </Btn>
              <Btn $w={24}>
                <svg width="18" height="18" viewBox="0 0 18 18" fill="none" stroke="#666" strokeWidth="1.6"><path d="M2 2h12l2 2v12H2z" /><path d="M5 2v5h8V2M5 16v-5h8v5" /></svg>
              </Btn>
              <Btn $w={24}><Gear s={17} c="#6f6f6f" /></Btn>
              <Btn $w={80} $ml={2} $bg="#fff">2026/04/20</Btn>
              <Btn $w={23}>
                <svg width="16" height="14" viewBox="0 0 16 14" fill="none" stroke="#666"><rect x="1" y="1" width="14" height="12" /><path d="M1 4.500h14" strokeWidth="2" /><path d="M1 8h14M1 11h14M5.500 5v8M10.500 5v8" /></svg>
              </Btn>
            </Row>
            <Row $h={24} style={{ paddingLeft: 8 }}>
              <InfoCell $w={216}>
                <Val $w={76} $c={TXT_RED}>6,520</Val>
                <svg width="14" height="15" viewBox="0 0 14 15" style={{ marginLeft: 4, flex: "none" }}><path d="M7 0l7 8H9.500v7h-5V8H0z" fill="#e8190a" /></svg>
                <Val $w={60} $c={TXT_RED}>1,500</Val>
                <Val $w={59} $c={TXT_RED}>+29.88%</Val>
              </InfoCell>
              <InfoCell $w={213}>
                <Val $w={87}>1,896,247</Val>
                <Val $w={74} $c={TXT_RED}>2,628.78%</Val>
                <Val $w={50}>2.26%</Val>
              </InfoCell>
              <InfoCell $w={103}><Val $w={99}>11,935백만</Val></InfoCell>
              <InfoCell $w={176}>
                <Val $w={49} $left $ls={1} style={{ marginLeft: 3 }}>최우선</Val>
                <Val $w={34}>0</Val>
                <Val $w={78} $c={TXT_RED}>6,520</Val>
              </InfoCell>
              <InfoCell $w={230}>
                <Val $w={16} $left style={{ marginLeft: 2 }}>시</Val>
                <Val $w={46} $c={TXT_RED}>5,820</Val>
                <Val $w={26}>고</Val>
                <Val $w={50} $c={TXT_RED}>6,520</Val>
                <Val $w={26}>저</Val>
                <Val $w={51} $c={TXT_RED}>5,090</Val>
              </InfoCell>
              <Trade $bg="#f2d0ca" $w={49} $ml={3}>매수</Trade>
              <Trade $bg="#c3dcf2" $w={48} $ml={4}>매도</Trade>
            </Row>
          </Header>
          <ChartWrap>
            <Edge />
            <ChartCol>
              <Pane $h={464} $line><PricePlot /><PriceAxis /><AxisEnd /></Pane>
              <Pane $h={142}><VolumePlot /><VolumeAxis /><AxisEnd /></Pane>
              <XRow>
                <XCell $w={309.500}>2025/12</XCell>
                <XCell $w={360}>2026/01</XCell>
                <XCell $w={292}>02</XCell>
                <XCell $w={360.500}>03</XCell>
                <XCell $w={278.500}>04</XCell>
                <XCell $w={82} $pl={10} $end>04/20</XCell>
              </XRow>
              <ScrollRow>
                <SBtn><svg width="6" height="10"><path d="M6 0v10L0 5z" fill="#111" /></svg></SBtn>
                <Thumb />
                <SBtn $ml={1}><svg width="6" height="10"><path d="M0 0v10l6-5z" fill="#111" /></svg></SBtn>
                <SBtn><svg width="12" height="10"><path d="M6 0v10L0 5zM12 0v10L6 5z" fill="#111" /></svg></SBtn>
                <SBtn><svg width="9" height="9"><rect width="9" height="9" fill="#111" /></svg></SBtn>
                <SBtn><svg width="12" height="10"><path d="M0 0v10l6-5zM6 0v10l6-5z" fill="#111" /></svg></SBtn>
                <Slider viewBox="0 0 92 23">
                  <path d="M2 6h85" stroke="#8a8a8a" strokeWidth="2" />
                  <path d="M17 3h3v10l-2 4-1-4z" fill="#efefef" stroke="#777" />
                  <path d="M3 18v3M11 18v3M19 18v3M27 18v3M35 18v3M43 18v3M51 18v3M59 18v3M67 18v3M75 18v3M83 18v3" stroke="#666" />
                </Slider>
                {tray.slice(0, 3).map((ic, i) => <MiniIcon key={i} $ml={i === 0 ? 2 : 0}>{ic}</MiniIcon>)}
                <MiniIcon $on>{tray[3]}</MiniIcon>
                {tray.slice(4).map((ic, i) => <MiniIcon key={i}>{ic}</MiniIcon>)}
                <MiniIcon><Lens c="#8a8a8a" /></MiniIcon>
                <MiniIcon><svg width="14" height="4"><rect width="14" height="3" y=".5" fill="#8a8a8a" /></svg></MiniIcon>
                <MiniIcon><svg width="14" height="14"><path d="M5.500 0h3v5.500H14v3H8.500V14h-3V8.500H0v-3h5.500z" fill="#8a8a8a" /></svg></MiniIcon>
                <MiniIcon>A</MiniIcon>
              </ScrollRow>
            </ChartCol>
          </ChartWrap>
        </LeftCol>
        <Side>
          <Grip />
          {sideIcons.map((ic, i) => <SideBtn key={i}>{ic}</SideBtn>)}
        </Side>
      </Main>
      <Bottom>
        <BCell $w={28} $bg="#fff" />
        <BCell $w={57} $ml={4} $bg="#fff">115500</BCell>
        <BCell $w={18}><DD /></BCell>
        <BCell $w={23}><Lens /></BCell>
        <BCell $w={21} $ml={2}>코</BCell>
        <BCell $w={35} $bg="#cfcfcf" $ml={1}>40%</BCell>
        <NameCell $w={78} $bg="#fff">케이씨에스<Corner style={{ borderBottomColor: "#aaa" }} /></NameCell>
        <Order $bg="#f2cdc6" $w={277} $pl={5} $ml={7}>보통   현재가    현100%</Order>
        <Order $bg="#c3daef" $w={278} $pl={5} $ml={2}>보통   현재가     100%</Order>
        <Order $bg="#dce6c8" $w={278} $pl={39}>현재가    잔량전부</Order>
        <Order $bg="#ecdcc0" $w={278} $pl={89}>잔량전부</Order>
        <Tail>
          <svg width="20" height="20" viewBox="0 0 20 20" fill="#6e6e6e"><path d="M5 1h10v2l-2 1v6l3 3v1H4v-1l3-3V4L5 3zM9 14h2v6H9z" /></svg>
          <Gear s={19} c="#6e6e6e" />
        </Tail>
      </Bottom>
    </Page>
  );
}
